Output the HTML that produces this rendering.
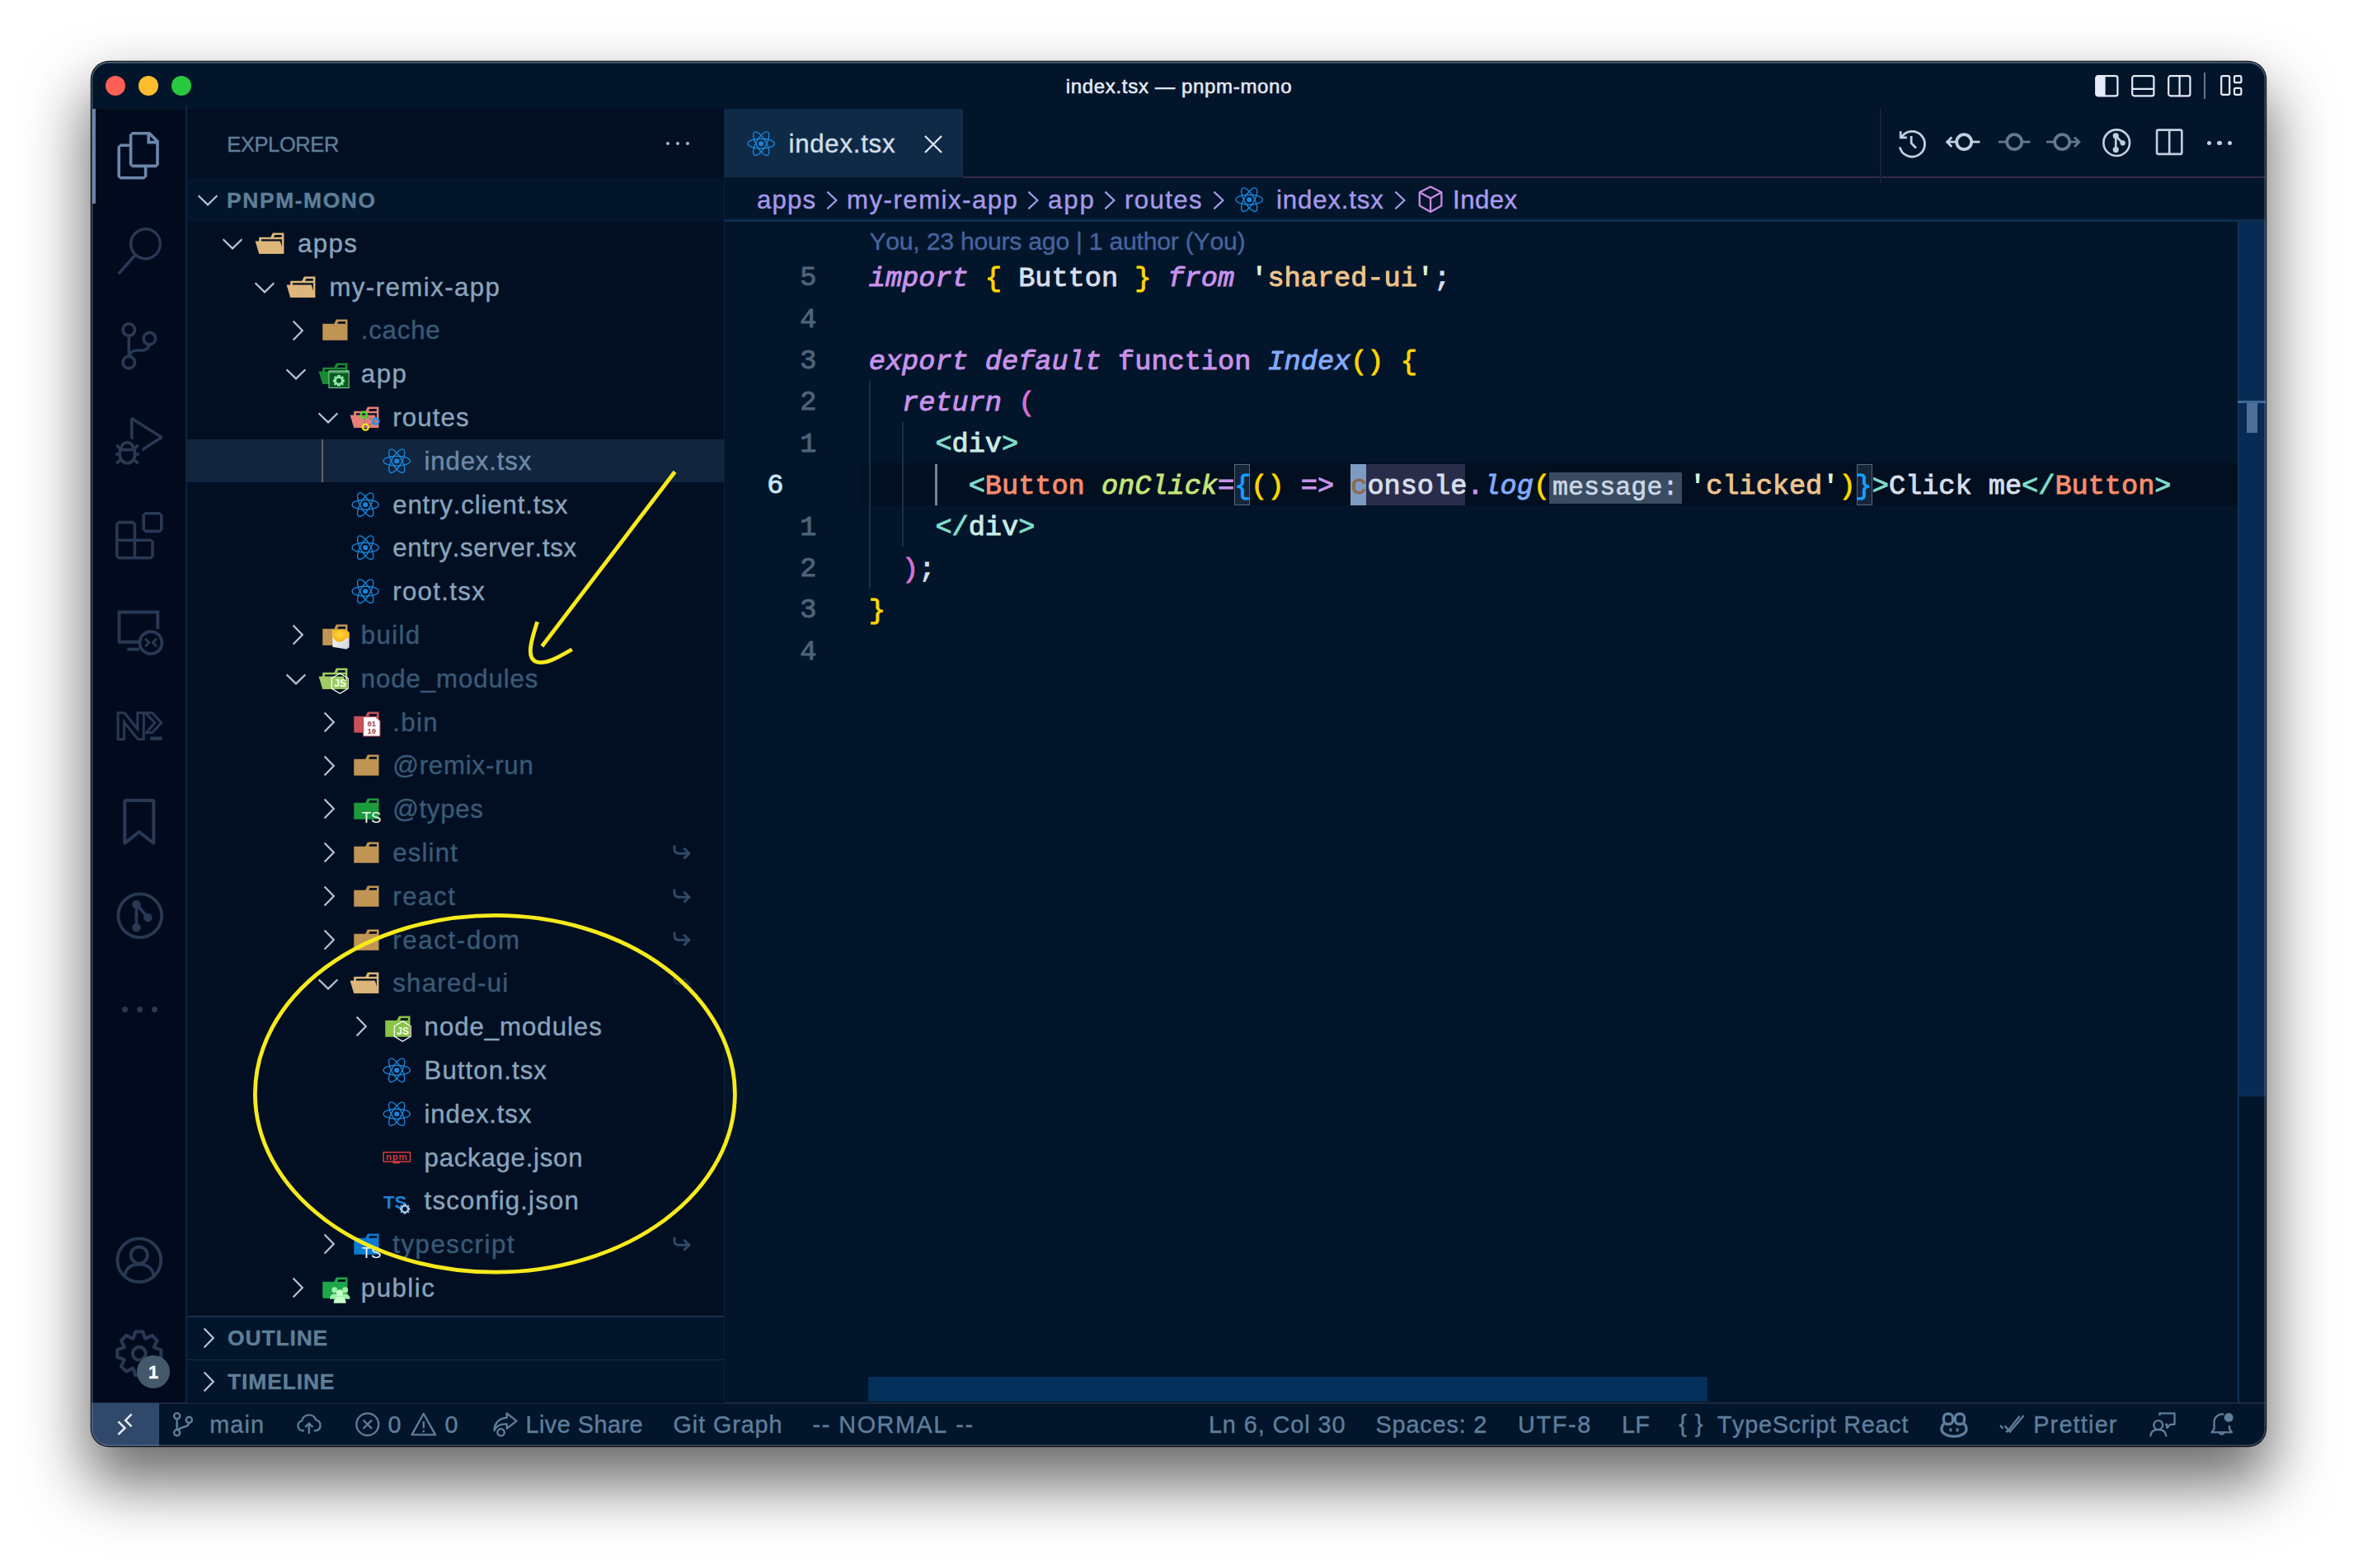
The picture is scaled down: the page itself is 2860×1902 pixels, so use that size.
<!DOCTYPE html>
<html lang="en"><head><meta charset="utf-8"><title>index.tsx — pnpm-mono</title>
<style>
html,body{margin:0;padding:0;}
body{width:2860px;height:1902px;background:#fff;position:relative;overflow:hidden;font-family:"Liberation Sans",sans-serif;}
.b{position:absolute;display:block;}
svg.b{overflow:visible;}
.t{position:absolute;white-space:pre;display:block;-webkit-text-stroke:0.4px currentColor;font-kerning:none;font-variant-ligatures:none;}
.m{font-family:"Liberation Mono",monospace;-webkit-text-stroke:0.95px currentColor;}
#shadow{position:absolute;left:111px;top:75px;width:2637px;height:1679px;border-radius:21px;
 box-shadow:0 0 0 1.2px rgba(0,0,0,.9),0 40px 74px 6px rgba(0,0,0,.58);}
#win{position:absolute;left:111px;top:75px;width:2637px;height:1679px;border-radius:21px;overflow:hidden;background:#02152a;}
#in{position:absolute;left:-111px;top:-75px;width:2860px;height:1902px;}
#over{position:absolute;left:0;top:0;}
#rim{position:absolute;left:0;top:0;right:0;bottom:0;border-radius:21px;box-shadow:inset 0 0 0 1.6px rgba(150,170,200,.33),inset 0 1.4px 0 0.4px rgba(180,190,210,.25);pointer-events:none;}
</style></head><body>
<div id="shadow"></div>
<div id="win"><div id="in">
<div class="b" style="left:111.0px;top:75.0px;width:2637.0px;height:56.5px;background:#02152a;"></div>
<div class="b" style="left:128.0px;top:91.6px;width:24.4px;height:24.4px;border-radius:50%;background:#fe5f57;"></div>
<div class="b" style="left:168.0px;top:91.6px;width:24.4px;height:24.4px;border-radius:50%;background:#febc2e;"></div>
<div class="b" style="left:208.0px;top:91.6px;width:24.4px;height:24.4px;border-radius:50%;background:#28c840;"></div>
<span class="t" style="left:1292.7px;top:89.1px;font-size:24px;line-height:31.2px;color:#e3e8f4;letter-spacing:0.685px;-webkit-text-stroke:0.55px currentColor;">index.tsx — pnpm-mono</span>
<div class="b" style="left:111.0px;top:131.5px;width:115.0px;height:1570.0px;background:#020a1e;"></div>
<div class="b" style="left:224.8px;top:128.0px;width:2.0px;height:1573.5px;background:#12233d;"></div>
<div class="b" style="left:112.4px;top:131.5px;width:3.8px;height:115.5px;background:#6a82a5;"></div>
<div class="b" style="left:226.8px;top:131.5px;width:652.2px;height:1570.0px;background:#020f23;"></div>
<div class="b" style="left:878.0px;top:131.5px;width:1.5px;height:1570.0px;background:#0e2038;"></div>
<div class="b" style="left:879.0px;top:131.5px;width:1869.0px;height:1570.0px;background:#02152a;"></div>
<div class="b" style="left:111.0px;top:1701.5px;width:2637.0px;height:52.5px;background:#02152a;"></div>
<div class="b" style="left:111.0px;top:1700.5px;width:2637.0px;height:2.0px;background:#1c2740;"></div>
<div class="b" style="left:111.0px;top:1701.5px;width:82.0px;height:52.5px;background:#30486a;"></div>
<span class="t" style="left:275.3px;top:158.9px;font-size:25.4px;line-height:33.0px;color:#5f7e97;letter-spacing:-0.333px;">EXPLORER</span>
<div class="b" style="left:807.7px;top:171.5px;width:4.6px;height:4.6px;border-radius:50%;background:#a9b8cc;"></div>
<div class="b" style="left:819.7px;top:171.5px;width:4.6px;height:4.6px;border-radius:50%;background:#a9b8cc;"></div>
<div class="b" style="left:831.7px;top:171.5px;width:4.6px;height:4.6px;border-radius:50%;background:#a9b8cc;"></div>
<div class="b" style="left:226.8px;top:215.5px;width:651.2px;height:53.0px;background:#02152a;"></div>
<span class="t" style="left:275.1px;top:226.0px;font-size:26.4px;line-height:34.3px;color:#5f7e97;font-weight:700;letter-spacing:1.599px;">PNPM-MONO</span>
<svg class="b" style="left:237.5px;top:232.8px;" width="28.0" height="20.0" viewBox="0 0 28 20"><path d="M2.6 4.2 L14 15.4 L25.4 4.2" fill="none" stroke="#b4c3d8" stroke-width="2.2"/></svg>
<div class="b" style="left:226.8px;top:532.6px;width:651.2px;height:52.8px;background:#11253e;"></div>
<div class="b" style="left:390.3px;top:532.6px;width:1.5px;height:52.8px;background:#6e625f;"></div>
<svg class="b" style="left:268.4px;top:286.0px;" width="28.0" height="20.0" viewBox="0 0 28 20"><path d="M2.6 4.2 L14 15.4 L25.4 4.2" fill="none" stroke="#b4c3d8" stroke-width="2.2"/></svg>
<svg class="b" style="left:308.7px;top:275.8px;" width="38.4" height="38.4" viewBox="0 0 32 32"><path d="M27.4,5.5H18.2L16.1,9.7H4.3V26.5H29.5V5.5Zm0,18.7H6.6V11.8H27.4Zm0-14.5H19.2l1-2.1h7.1V9.7Z" fill="#dcb67a"/><polygon points="25.7 13.7 0.5 13.7 4.3 26.5 29.5 26.5 25.7 13.7" fill="#dcb67a"/></svg>
<span class="t" style="left:361.0px;top:275.8px;font-size:31.2px;line-height:40.6px;color:#89a4bb;letter-spacing:1.428px;">apps</span>
<svg class="b" style="left:306.8px;top:338.8px;" width="28.0" height="20.0" viewBox="0 0 28 20"><path d="M2.6 4.2 L14 15.4 L25.4 4.2" fill="none" stroke="#b4c3d8" stroke-width="2.2"/></svg>
<svg class="b" style="left:347.1px;top:328.6px;" width="38.4" height="38.4" viewBox="0 0 32 32"><path d="M27.4,5.5H18.2L16.1,9.7H4.3V26.5H29.5V5.5Zm0,18.7H6.6V11.8H27.4Zm0-14.5H19.2l1-2.1h7.1V9.7Z" fill="#dcb67a"/><polygon points="25.7 13.7 0.5 13.7 4.3 26.5 29.5 26.5 25.7 13.7" fill="#dcb67a"/></svg>
<span class="t" style="left:399.4px;top:328.6px;font-size:31.2px;line-height:40.6px;color:#89a4bb;letter-spacing:1.450px;">my-remix-app</span>
<svg class="b" style="left:350.7px;top:386.6px;" width="20.0" height="28.0" viewBox="0 0 20 28"><path d="M4.6 2.6 L15.8 14 L4.6 25.4" fill="none" stroke="#b4c3d8" stroke-width="2.2"/></svg>
<svg class="b" style="left:385.5px;top:381.4px;" width="38.4" height="38.4" viewBox="0 0 32 32"><path d="M27.5,5.5H18.2L16.1,9.7H4.4V26.5H29.6V5.5Zm0,4.2H19.3l1.1-2.1h7.1Z" fill="#c09553"/></svg>
<span class="t" style="left:437.8px;top:381.4px;font-size:31.2px;line-height:40.6px;color:#395a75;letter-spacing:0.783px;">.cache</span>
<svg class="b" style="left:345.2px;top:444.4px;" width="28.0" height="20.0" viewBox="0 0 28 20"><path d="M2.6 4.2 L14 15.4 L25.4 4.2" fill="none" stroke="#b4c3d8" stroke-width="2.2"/></svg>
<svg class="b" style="left:385.5px;top:434.2px;" width="38.4" height="38.4" viewBox="0 0 32 32"><path d="M27.4,5.5H18.2L16.1,9.7H4.3V26.5H29.5V5.5Zm0,18.7H6.6V11.8H27.4Zm0-14.5H19.2l1-2.1h7.1V9.7Z" fill="#1b8a33"/><polygon points="25.7 13.7 0.5 13.7 4.3 26.5 29.5 26.5 25.7 13.7" fill="#1b8a33"/><rect x="10.8" y="13.2" width="20.2" height="17.3" fill="#0c5a22" stroke="#8fe9ad" stroke-width="0.7"/><rect x="10.8" y="13.2" width="20.2" height="2.2" fill="#8fe9ad" opacity=".55"/><g transform="translate(20.8,23.2) scale(0.967)"><path d="M0,-6 L1.5,-5.8 L2.2,-3.9 L3.9,-4.9 L5.2,-3.6 L4.3,-1.9 L6,-1.2 L6,1.2 L4.3,1.9 L5.2,3.6 L3.9,4.9 L2.2,3.9 L1.5,5.8 L-1.5,5.8 L-2.2,3.9 L-3.9,4.9 L-5.2,3.6 L-4.3,1.9 L-6,1.2 L-6,-1.2 L-4.3,-1.9 L-5.2,-3.6 L-3.9,-4.9 L-2.2,-3.9 L-1.5,-5.8 Z" fill="#8fe9ad"/><circle r="2.6" fill="#0c5a22"/></g></svg>
<span class="t" style="left:437.8px;top:434.2px;font-size:31.2px;line-height:40.6px;color:#89a4bb;letter-spacing:1.492px;">app</span>
<svg class="b" style="left:383.6px;top:497.2px;" width="28.0" height="20.0" viewBox="0 0 28 20"><path d="M2.6 4.2 L14 15.4 L25.4 4.2" fill="none" stroke="#b4c3d8" stroke-width="2.2"/></svg>
<svg class="b" style="left:423.9px;top:487.0px;" width="38.4" height="38.4" viewBox="0 0 32 32"><path d="M27.4,5.5H18.2L16.1,9.7H4.3V26.5H29.5V5.5Zm0,18.7H6.6V11.8H27.4Zm0-14.5H19.2l1-2.1h7.1V9.7Z" fill="#e57f78"/><polygon points="25.7 13.7 0.5 13.7 4.3 26.5 29.5 26.5 25.7 13.7" fill="#e57f78"/><g fill="none" stroke="#6b6f7c" stroke-width="1.4" stroke-dasharray="2 1.4"><path d="M14.4 13.6 L16.1 25.9 M14.4 13.6 L26.5 20.1 M16.1 25.9 L26.5 20.1"/></g><circle cx="14.4" cy="13.6" r="3" fill="none" stroke="#3fdc2b" stroke-width="2"/><circle cx="26.5" cy="20.1" r="3" fill="none" stroke="#2d8fe8" stroke-width="2"/><circle cx="16.1" cy="25.9" r="3" fill="none" stroke="#f2dc20" stroke-width="2"/></svg>
<span class="t" style="left:476.2px;top:487.0px;font-size:31.2px;line-height:40.6px;color:#89a4bb;letter-spacing:1.145px;">routes</span>
<svg class="b" style="left:462.3px;top:539.8px;" width="38.4" height="38.4" viewBox="0 0 32 32"><g fill="none" stroke="#1886dc" stroke-width="1.15"><ellipse cx="16" cy="16" rx="13.4" ry="5"/><ellipse cx="16" cy="16" rx="13.4" ry="5" transform="rotate(60 16 16)"/><ellipse cx="16" cy="16" rx="13.4" ry="5" transform="rotate(120 16 16)"/></g><circle cx="16" cy="16" r="2.5" fill="#1886dc"/></svg>
<span class="t" style="left:514.6px;top:539.8px;font-size:31.2px;line-height:40.6px;color:#6f89a6;letter-spacing:0.827px;">index.tsx</span>
<svg class="b" style="left:423.9px;top:592.6px;" width="38.4" height="38.4" viewBox="0 0 32 32"><g fill="none" stroke="#1886dc" stroke-width="1.15"><ellipse cx="16" cy="16" rx="13.4" ry="5"/><ellipse cx="16" cy="16" rx="13.4" ry="5" transform="rotate(60 16 16)"/><ellipse cx="16" cy="16" rx="13.4" ry="5" transform="rotate(120 16 16)"/></g><circle cx="16" cy="16" r="2.5" fill="#1886dc"/></svg>
<span class="t" style="left:476.2px;top:592.6px;font-size:31.2px;line-height:40.6px;color:#89a4bb;letter-spacing:0.856px;">entry.client.tsx</span>
<svg class="b" style="left:423.9px;top:645.4px;" width="38.4" height="38.4" viewBox="0 0 32 32"><g fill="none" stroke="#1886dc" stroke-width="1.15"><ellipse cx="16" cy="16" rx="13.4" ry="5"/><ellipse cx="16" cy="16" rx="13.4" ry="5" transform="rotate(60 16 16)"/><ellipse cx="16" cy="16" rx="13.4" ry="5" transform="rotate(120 16 16)"/></g><circle cx="16" cy="16" r="2.5" fill="#1886dc"/></svg>
<span class="t" style="left:476.2px;top:645.4px;font-size:31.2px;line-height:40.6px;color:#89a4bb;letter-spacing:0.646px;">entry.server.tsx</span>
<svg class="b" style="left:423.9px;top:698.2px;" width="38.4" height="38.4" viewBox="0 0 32 32"><g fill="none" stroke="#1886dc" stroke-width="1.15"><ellipse cx="16" cy="16" rx="13.4" ry="5"/><ellipse cx="16" cy="16" rx="13.4" ry="5" transform="rotate(60 16 16)"/><ellipse cx="16" cy="16" rx="13.4" ry="5" transform="rotate(120 16 16)"/></g><circle cx="16" cy="16" r="2.5" fill="#1886dc"/></svg>
<span class="t" style="left:476.2px;top:698.2px;font-size:31.2px;line-height:40.6px;color:#89a4bb;letter-spacing:1.349px;">root.tsx</span>
<svg class="b" style="left:350.7px;top:756.2px;" width="20.0" height="28.0" viewBox="0 0 20 28"><path d="M4.6 2.6 L15.8 14 L4.6 25.4" fill="none" stroke="#b4c3d8" stroke-width="2.2"/></svg>
<svg class="b" style="left:385.5px;top:751.0px;" width="38.4" height="38.4" viewBox="0 0 32 32"><path d="M27.5,5.5H18.2L16.1,9.7H4.4V26.5H29.6V5.5Zm0,4.2H19.3l1.1-2.1h7.1Z" fill="#c09553"/><defs><linearGradient id="gb" x1="0" y1="0" x2="1" y2="1"><stop offset="0" stop-color="#ffffff"/><stop offset="1" stop-color="#cfd0da"/></linearGradient><radialGradient id="gy" cx=".45" cy=".4" r=".7"><stop offset="0" stop-color="#ffd83b"/><stop offset="1" stop-color="#f5a80c"/></radialGradient></defs><path d="M14.5 10.8 L28 10.8 L31.3 13.5 L31.3 28.5 L28.6 30.4 L14.5 28.2 Z" fill="url(#gb)"/><path d="M14.5 10.8 L28 10.8 L31.3 13.5 L31.3 19 C27 18 27 23 21.5 23 C17 23 15.2 19 14.5 17 Z" fill="url(#gy)"/></svg>
<span class="t" style="left:437.8px;top:751.0px;font-size:31.2px;line-height:40.6px;color:#395a75;letter-spacing:1.380px;">build</span>
<svg class="b" style="left:345.2px;top:814.0px;" width="28.0" height="20.0" viewBox="0 0 28 20"><path d="M2.6 4.2 L14 15.4 L25.4 4.2" fill="none" stroke="#b4c3d8" stroke-width="2.2"/></svg>
<svg class="b" style="left:385.5px;top:803.8px;" width="38.4" height="38.4" viewBox="0 0 32 32"><path d="M27.4,5.5H18.2L16.1,9.7H4.3V26.5H29.5V5.5Zm0,18.7H6.6V11.8H27.4Zm0-14.5H19.2l1-2.1h7.1V9.7Z" fill="#9ccc65"/><polygon points="25.7 13.7 0.5 13.7 4.3 26.5 29.5 26.5 25.7 13.7" fill="#9ccc65"/><polygon points="21.90,10.60 30.21,15.70 30.21,25.90 21.90,31.00 13.59,25.90 13.59,15.70" fill="none" stroke="#ffffff" stroke-width="1"/><text x="22.2" y="24.400000000000002" font-family="Liberation Sans,sans-serif" font-weight="700" font-size="10" text-anchor="middle" fill="#f4ffe8">JS</text></svg>
<span class="t" style="left:437.8px;top:803.8px;font-size:31.2px;line-height:40.6px;color:#395a75;letter-spacing:0.905px;">node_modules</span>
<svg class="b" style="left:389.1px;top:861.8px;" width="20.0" height="28.0" viewBox="0 0 20 28"><path d="M4.6 2.6 L15.8 14 L4.6 25.4" fill="none" stroke="#b4c3d8" stroke-width="2.2"/></svg>
<svg class="b" style="left:423.9px;top:856.6px;" width="38.4" height="38.4" viewBox="0 0 32 32"><path d="M27.5,5.5H18.2L16.1,9.7H4.4V26.5H29.6V5.5Zm0,4.2H19.3l1.1-2.1h7.1Z" fill="#c8505a"/><path d="M13.9 10.4 L26.5 10.4 L30.8 14.6 L30.8 30 L13.9 30 Z" fill="#ffffff" stroke="#b84a55" stroke-width="0.9"/><text x="22.3" y="19.6" font-family="Liberation Mono,monospace" font-weight="700" font-size="7.4" text-anchor="middle" fill="#a3363f">01</text><text x="22.3" y="27.4" font-family="Liberation Mono,monospace" font-weight="700" font-size="7.4" text-anchor="middle" fill="#a3363f">10</text></svg>
<span class="t" style="left:476.2px;top:856.6px;font-size:31.2px;line-height:40.6px;color:#395a75;letter-spacing:1.412px;">.bin</span>
<svg class="b" style="left:389.1px;top:914.6px;" width="20.0" height="28.0" viewBox="0 0 20 28"><path d="M4.6 2.6 L15.8 14 L4.6 25.4" fill="none" stroke="#b4c3d8" stroke-width="2.2"/></svg>
<svg class="b" style="left:423.9px;top:909.4px;" width="38.4" height="38.4" viewBox="0 0 32 32"><path d="M27.5,5.5H18.2L16.1,9.7H4.4V26.5H29.6V5.5Zm0,4.2H19.3l1.1-2.1h7.1Z" fill="#c09553"/></svg>
<span class="t" style="left:476.2px;top:909.4px;font-size:31.2px;line-height:40.6px;color:#395a75;letter-spacing:0.813px;">@remix-run</span>
<svg class="b" style="left:389.1px;top:967.4px;" width="20.0" height="28.0" viewBox="0 0 20 28"><path d="M4.6 2.6 L15.8 14 L4.6 25.4" fill="none" stroke="#b4c3d8" stroke-width="2.2"/></svg>
<svg class="b" style="left:423.9px;top:962.2px;" width="38.4" height="38.4" viewBox="0 0 32 32"><path d="M27.5,5.5H18.2L16.1,9.7H4.4V26.5H29.6V5.5Zm0,4.2H19.3l1.1-2.1h7.1Z" fill="#1d9a3c"/><text x="22.2" y="30.2" font-family="Liberation Sans,sans-serif" font-weight="400" font-size="15.5" text-anchor="middle" fill="#e9ffe9">TS</text></svg>
<span class="t" style="left:476.2px;top:962.2px;font-size:31.2px;line-height:40.6px;color:#395a75;letter-spacing:0.679px;">@types</span>
<svg class="b" style="left:389.1px;top:1020.2px;" width="20.0" height="28.0" viewBox="0 0 20 28"><path d="M4.6 2.6 L15.8 14 L4.6 25.4" fill="none" stroke="#b4c3d8" stroke-width="2.2"/></svg>
<svg class="b" style="left:423.9px;top:1015.0px;" width="38.4" height="38.4" viewBox="0 0 32 32"><path d="M27.5,5.5H18.2L16.1,9.7H4.4V26.5H29.6V5.5Zm0,4.2H19.3l1.1-2.1h7.1Z" fill="#c09553"/></svg>
<span class="t" style="left:476.2px;top:1015.0px;font-size:31.2px;line-height:40.6px;color:#395a75;letter-spacing:1.161px;">eslint</span>
<svg class="b" style="left:814.6px;top:1023.7px;" width="24.0" height="21.0" viewBox="0 0 24 21"><path d="M3 1.5 V6 Q3 11.2 8.4 11.2 H20.5 M14.4 4.8 L20.9 11.2 L14.4 17.6" fill="none" stroke="#2f4a68" stroke-width="2.9"/></svg>
<svg class="b" style="left:389.1px;top:1073.0px;" width="20.0" height="28.0" viewBox="0 0 20 28"><path d="M4.6 2.6 L15.8 14 L4.6 25.4" fill="none" stroke="#b4c3d8" stroke-width="2.2"/></svg>
<svg class="b" style="left:423.9px;top:1067.8px;" width="38.4" height="38.4" viewBox="0 0 32 32"><path d="M27.5,5.5H18.2L16.1,9.7H4.4V26.5H29.6V5.5Zm0,4.2H19.3l1.1-2.1h7.1Z" fill="#c09553"/></svg>
<span class="t" style="left:476.2px;top:1067.8px;font-size:31.2px;line-height:40.6px;color:#395a75;letter-spacing:1.594px;">react</span>
<svg class="b" style="left:814.6px;top:1076.5px;" width="24.0" height="21.0" viewBox="0 0 24 21"><path d="M3 1.5 V6 Q3 11.2 8.4 11.2 H20.5 M14.4 4.8 L20.9 11.2 L14.4 17.6" fill="none" stroke="#2f4a68" stroke-width="2.9"/></svg>
<svg class="b" style="left:389.1px;top:1125.8px;" width="20.0" height="28.0" viewBox="0 0 20 28"><path d="M4.6 2.6 L15.8 14 L4.6 25.4" fill="none" stroke="#b4c3d8" stroke-width="2.2"/></svg>
<svg class="b" style="left:423.9px;top:1120.6px;" width="38.4" height="38.4" viewBox="0 0 32 32"><path d="M27.5,5.5H18.2L16.1,9.7H4.4V26.5H29.6V5.5Zm0,4.2H19.3l1.1-2.1h7.1Z" fill="#c09553"/></svg>
<span class="t" style="left:476.2px;top:1120.6px;font-size:31.2px;line-height:40.6px;color:#395a75;letter-spacing:1.662px;">react-dom</span>
<svg class="b" style="left:814.6px;top:1129.3px;" width="24.0" height="21.0" viewBox="0 0 24 21"><path d="M3 1.5 V6 Q3 11.2 8.4 11.2 H20.5 M14.4 4.8 L20.9 11.2 L14.4 17.6" fill="none" stroke="#2f4a68" stroke-width="2.9"/></svg>
<svg class="b" style="left:383.6px;top:1183.6px;" width="28.0" height="20.0" viewBox="0 0 28 20"><path d="M2.6 4.2 L14 15.4 L25.4 4.2" fill="none" stroke="#b4c3d8" stroke-width="2.2"/></svg>
<svg class="b" style="left:423.9px;top:1173.4px;" width="38.4" height="38.4" viewBox="0 0 32 32"><path d="M27.4,5.5H18.2L16.1,9.7H4.3V26.5H29.5V5.5Zm0,18.7H6.6V11.8H27.4Zm0-14.5H19.2l1-2.1h7.1V9.7Z" fill="#dcb67a"/><polygon points="25.7 13.7 0.5 13.7 4.3 26.5 29.5 26.5 25.7 13.7" fill="#dcb67a"/></svg>
<span class="t" style="left:476.2px;top:1173.4px;font-size:31.2px;line-height:40.6px;color:#395a75;letter-spacing:1.259px;">shared-ui</span>
<svg class="b" style="left:814.6px;top:1182.1px;" width="24.0" height="21.0" viewBox="0 0 24 21"><path d="M3 1.5 V6 Q3 11.2 8.4 11.2 H20.5 M14.4 4.8 L20.9 11.2 L14.4 17.6" fill="none" stroke="#182a42" stroke-width="2.9"/></svg>
<svg class="b" style="left:427.5px;top:1231.4px;" width="20.0" height="28.0" viewBox="0 0 20 28"><path d="M4.6 2.6 L15.8 14 L4.6 25.4" fill="none" stroke="#b4c3d8" stroke-width="2.2"/></svg>
<svg class="b" style="left:462.3px;top:1226.2px;" width="38.4" height="38.4" viewBox="0 0 32 32"><path d="M27.5,5.5H18.2L16.1,9.7H4.4V26.5H29.6V5.5Zm0,4.2H19.3l1.1-2.1h7.1Z" fill="#8bc34a"/><polygon points="21.90,10.60 30.21,15.70 30.21,25.90 21.90,31.00 13.59,25.90 13.59,15.70" fill="none" stroke="#ffffff" stroke-width="1"/><text x="22.2" y="24.400000000000002" font-family="Liberation Sans,sans-serif" font-weight="700" font-size="10" text-anchor="middle" fill="#f4ffe8">JS</text></svg>
<span class="t" style="left:514.6px;top:1226.2px;font-size:31.2px;line-height:40.6px;color:#89a4bb;letter-spacing:0.959px;">node_modules</span>
<svg class="b" style="left:462.3px;top:1279.0px;" width="38.4" height="38.4" viewBox="0 0 32 32"><g fill="none" stroke="#1886dc" stroke-width="1.15"><ellipse cx="16" cy="16" rx="13.4" ry="5"/><ellipse cx="16" cy="16" rx="13.4" ry="5" transform="rotate(60 16 16)"/><ellipse cx="16" cy="16" rx="13.4" ry="5" transform="rotate(120 16 16)"/></g><circle cx="16" cy="16" r="2.5" fill="#1886dc"/></svg>
<span class="t" style="left:514.6px;top:1279.0px;font-size:31.2px;line-height:40.6px;color:#89a4bb;letter-spacing:1.067px;">Button.tsx</span>
<svg class="b" style="left:462.3px;top:1331.8px;" width="38.4" height="38.4" viewBox="0 0 32 32"><g fill="none" stroke="#1886dc" stroke-width="1.15"><ellipse cx="16" cy="16" rx="13.4" ry="5"/><ellipse cx="16" cy="16" rx="13.4" ry="5" transform="rotate(60 16 16)"/><ellipse cx="16" cy="16" rx="13.4" ry="5" transform="rotate(120 16 16)"/></g><circle cx="16" cy="16" r="2.5" fill="#1886dc"/></svg>
<span class="t" style="left:514.6px;top:1331.8px;font-size:31.2px;line-height:40.6px;color:#89a4bb;letter-spacing:0.839px;">index.tsx</span>
<svg class="b" style="left:462.3px;top:1384.6px;" width="38.4" height="38.4" viewBox="0 0 32 32"><rect x="2.6" y="10.6" width="27" height="9.4" fill="none" stroke="#d13a3a" stroke-width="1.3"/><rect x="12" y="19.6" width="7" height="2.4" fill="#d13a3a"/><text x="16" y="18.6" font-family="Liberation Sans,sans-serif" font-weight="700" font-size="9.6" text-anchor="middle" fill="#d13a3a" letter-spacing="0.6">npm</text></svg>
<span class="t" style="left:514.6px;top:1384.6px;font-size:31.2px;line-height:40.6px;color:#89a4bb;letter-spacing:0.743px;">package.json</span>
<svg class="b" style="left:462.3px;top:1437.4px;" width="38.4" height="38.4" viewBox="0 0 32 32"><text x="2.4" y="24.2" font-family="Liberation Sans,sans-serif" font-weight="700" font-size="18.5" fill="#1b82d6">TS</text><g transform="translate(24.2,24.6) scale(0.867)"><path d="M0,-6 L1.5,-5.8 L2.2,-3.9 L3.9,-4.9 L5.2,-3.6 L4.3,-1.9 L6,-1.2 L6,1.2 L4.3,1.9 L5.2,3.6 L3.9,4.9 L2.2,3.9 L1.5,5.8 L-1.5,5.8 L-2.2,3.9 L-3.9,4.9 L-5.2,3.6 L-4.3,1.9 L-6,1.2 L-6,-1.2 L-4.3,-1.9 L-5.2,-3.6 L-3.9,-4.9 L-2.2,-3.9 L-1.5,-5.8 Z" fill="#9bc4ea"/><circle r="2.6" fill="#020f23"/></g></svg>
<span class="t" style="left:514.6px;top:1437.4px;font-size:31.2px;line-height:40.6px;color:#89a4bb;letter-spacing:1.151px;">tsconfig.json</span>
<svg class="b" style="left:389.1px;top:1495.4px;" width="20.0" height="28.0" viewBox="0 0 20 28"><path d="M4.6 2.6 L15.8 14 L4.6 25.4" fill="none" stroke="#b4c3d8" stroke-width="2.2"/></svg>
<svg class="b" style="left:423.9px;top:1490.2px;" width="38.4" height="38.4" viewBox="0 0 32 32"><path d="M27.5,5.5H18.2L16.1,9.7H4.4V26.5H29.6V5.5Zm0,4.2H19.3l1.1-2.1h7.1Z" fill="#0a7bd0"/><text x="22.2" y="30.2" font-family="Liberation Sans,sans-serif" font-weight="400" font-size="15.5" text-anchor="middle" fill="#eaf5ff">TS</text></svg>
<span class="t" style="left:476.2px;top:1490.2px;font-size:31.2px;line-height:40.6px;color:#395a75;letter-spacing:1.547px;">typescript</span>
<svg class="b" style="left:814.6px;top:1498.9px;" width="24.0" height="21.0" viewBox="0 0 24 21"><path d="M3 1.5 V6 Q3 11.2 8.4 11.2 H20.5 M14.4 4.8 L20.9 11.2 L14.4 17.6" fill="none" stroke="#2f4a68" stroke-width="2.9"/></svg>
<svg class="b" style="left:350.7px;top:1548.2px;" width="20.0" height="28.0" viewBox="0 0 20 28"><path d="M4.6 2.6 L15.8 14 L4.6 25.4" fill="none" stroke="#b4c3d8" stroke-width="2.2"/></svg>
<svg class="b" style="left:385.5px;top:1543.0px;" width="38.4" height="38.4" viewBox="0 0 32 32"><path d="M27.5,5.5H18.2L16.1,9.7H4.4V26.5H29.6V5.5Zm0,4.2H19.3l1.1-2.1h7.1Z" fill="#1fa64b"/><g fill="#9cf0a4"><circle cx="16.5" cy="18.2" r="2.9"/><circle cx="27.2" cy="18.2" r="2.9"/><path d="M11.6 27.2 c0-3.4 2.2-5.2 4.9-5.2 s4.9 1.8 4.9 5.2z"/><path d="M22.3 27.2 c0-3.4 2.2-5.2 4.9-5.2 s4.9 1.8 4.9 5.2z"/></g><g fill="#c6ffc9"><circle cx="21.8" cy="21.2" r="3.5"/><path d="M15.6 31.4 c0-4.6 2.8-6.6 6.2-6.6 s6.2 2 6.2 6.6z"/></g></svg>
<span class="t" style="left:437.8px;top:1543.0px;font-size:31.2px;line-height:40.6px;color:#89a4bb;letter-spacing:1.504px;">public</span>
<div class="b" style="left:226.8px;top:1596.0px;width:651.2px;height:1.6px;background:#172b45;"></div>
<div class="b" style="left:226.8px;top:1597.6px;width:651.2px;height:51.2px;background:#02152a;"></div>
<svg class="b" style="left:243.0px;top:1609.3px;" width="20.0" height="28.0" viewBox="0 0 20 28"><path d="M4.6 2.6 L15.8 14 L4.6 25.4" fill="none" stroke="#b4c3d8" stroke-width="2.2"/></svg>
<span class="t" style="left:276.0px;top:1605.9px;font-size:26.4px;line-height:34.3px;color:#5f7e97;font-weight:700;letter-spacing:0.900px;">OUTLINE</span>
<div class="b" style="left:226.8px;top:1648.8px;width:651.2px;height:1.6px;background:#172b45;"></div>
<div class="b" style="left:226.8px;top:1650.4px;width:651.2px;height:51.2px;background:#02152a;"></div>
<svg class="b" style="left:243.0px;top:1662.1px;" width="20.0" height="28.0" viewBox="0 0 20 28"><path d="M4.6 2.6 L15.8 14 L4.6 25.4" fill="none" stroke="#b4c3d8" stroke-width="2.2"/></svg>
<span class="t" style="left:276.0px;top:1658.7px;font-size:26.4px;line-height:34.3px;color:#5f7e97;font-weight:700;letter-spacing:0.900px;">TIMELINE</span>
<svg class="b" style="left:139.8px;top:160.3px;" width="57.6" height="57.6" viewBox="0 0 24 24"><g fill="#6d87ab"><path d="M17.5 0h-9L7 1.5V6H2.5L1 7.5v15.07L2.5 24h12.07L16 22.57V18h4.7l1.3-1.43V4.5L17.5 0zm0 2.12l2.38 2.38H17.5V2.12zm-3 20.38h-12v-15H7v9.07L8.5 18h6v4.5zm6-6h-12v-15H16V6h4.5v10.5z"/></g></svg>
<svg class="b" style="left:139.8px;top:275.5px;" width="57.6" height="57.6" viewBox="0 0 24 24"><g fill="#293953"><path d="M15.25 0a8.25 8.25 0 0 0-6.18 13.72L1 22.88l1.12 1.12 8.05-9.12A8.251 8.251 0 1 0 15.25.01V0zm0 15a6.75 6.75 0 1 1 0-13.5 6.75 6.75 0 0 1 0 13.5z"/></g></svg>
<svg class="b" style="left:139.8px;top:390.7px;" width="57.6" height="57.6" viewBox="0 0 24 24"><g fill="#293953"><path d="M21.007 8.222A3.738 3.738 0 0 0 15.045 5.2a3.737 3.737 0 0 0 1.156 6.583 2.988 2.988 0 0 1-2.668 1.67h-2.99a4.456 4.456 0 0 0-2.989 1.165V7.4a3.737 3.737 0 1 0-1.494 0v9.117a3.776 3.776 0 1 0 1.816.099 2.99 2.99 0 0 1 2.668-1.667h2.99a4.484 4.484 0 0 0 4.223-3.039 3.736 3.736 0 0 0 3.25-3.687zM4.565 3.738a2.242 2.242 0 1 1 4.484 0 2.242 2.242 0 0 1-4.484 0zm4.484 16.441a2.242 2.242 0 1 1-4.484 0 2.242 2.242 0 0 1 4.484 0zm8.221-9.715a2.242 2.242 0 1 1 0-4.485 2.242 2.242 0 0 1 0 4.485z"/></g></svg>
<svg class="b" style="left:139.8px;top:505.9px;" width="57.6" height="57.6" viewBox="0 0 24 24"><g fill="#293953"><path d="M10.94 13.5l-1.32 1.32a3.73 3.73 0 0 0-7.24 0L1.06 13.5 0 14.56l1.72 1.72-.22.22V18H0v1.5h1.5v.08c.077.489.214.966.41 1.42L0 22.94 1.06 24l1.65-1.65A4.308 4.308 0 0 0 6 24a4.31 4.31 0 0 0 3.29-1.65L10.94 24 12 22.94 10.09 21c.198-.464.336-.951.41-1.45v-.1H12V18h-1.5v-1.5l-.22-.22L12 14.56l-1.06-1.06zM6 13.5a2.25 2.25 0 0 1 2.25 2.25h-4.5A2.25 2.25 0 0 1 6 13.5zm3 6a3.33 3.33 0 0 1-3 3 3.33 3.33 0 0 1-3-3v-2.25h6v2.25zm14.76-9.9v1.26L13.5 17.37V15.6l8.5-5.37L9 2v9.46a5.07 5.07 0 0 0-1.5-.72V.63L8.64 0l15.12 9.6z"/></g></svg>
<svg class="b" style="left:139.8px;top:621.1px;" width="57.6" height="57.6" viewBox="0 0 24 24"><g fill="#293953"><path d="M13.5 1.5L15 0h7.5L24 1.5V9l-1.5 1.5H15L13.5 9V1.5zm1.5 0V9h7.5V1.5H15zM0 15V6l1.5-1.5H9L10.5 6v7.5H18l1.5 1.5v7.5L18 24H1.5L0 22.5V15zm9-1.5V6H1.5v7.5H9zM9 15H1.5v7.5H9V15zm1.5 7.5H18V15h-7.5v7.5z"/></g></svg>
<svg class="b" style="left:139.8px;top:736.3px;" width="57.6" height="57.6" viewBox="0 0 24 24"><g fill="none" stroke="#293953" stroke-width="1.6"><path d="M13.2 17.8 H1.9 V2.7 H21.4 V11.2"/><path d="M6 21.5 H12.2"/><circle cx="17.9" cy="18.2" r="5.6" fill="#020a1e"/><path d="M15 16.1 L17 18.1 L15 20.1 M20.9 16.1 L18.9 18.1 L20.9 20.1" stroke-width="1.2"/></g></svg>
<svg class="b" style="left:139.8px;top:851.5px;" width="57.6" height="57.6" viewBox="0 0 24 24"><g fill="none" stroke="#293953" stroke-width="1.25" stroke-linejoin="miter"><path d="M1.3 18.6 V5.3 H4.6 L11.2 13.5 V5.3 H14.3 V18.6 H11.4 L4.4 10 V18.6 Z"/><path d="M15.3 5.3 H18.6 L23.2 10.3 L18.6 15.3 H15.6 L19.9 10.3 Z"/><path d="M17.6 18.2 H23.6" stroke-width="1.8"/></g></svg>
<svg class="b" style="left:139.8px;top:966.7px;" width="57.6" height="57.6" viewBox="0 0 24 24"><path d="M5.6 1.6 H18.4 Q19.3 1.6 19.3 2.5 V23.2 L12 17.6 L4.7 23.2 V2.5 Q4.7 1.6 5.6 1.6 Z" fill="none" stroke="#293953" stroke-width="1.7" stroke-linejoin="round"/></svg>
<svg class="b" style="left:139.8px;top:1081.9px;" width="57.6" height="57.6" viewBox="0 0 24 24"><g fill="none" stroke="#293953" stroke-width="1.6"><circle cx="12.4" cy="12" r="11"/><path d="M10.6 6.2 V18.2 M10.6 6.2 L16.3 12.8"/></g><g fill="#293953"><circle cx="10.6" cy="6.3" r="2.2"/><circle cx="10.6" cy="18" r="2.2"/><circle cx="16.4" cy="12.9" r="2.2"/></g></svg>
<div class="b" style="left:148.0px;top:1221.3px;width:7px;height:7px;border-radius:50%;background:#293953;"></div>
<div class="b" style="left:166.1px;top:1221.3px;width:7px;height:7px;border-radius:50%;background:#293953;"></div>
<div class="b" style="left:184.1px;top:1221.3px;width:7px;height:7px;border-radius:50%;background:#293953;"></div>
<svg class="b" style="left:139.8px;top:1499.6px;" width="57.6" height="57.6" viewBox="0 0 24 24"><g fill="none" stroke="#293953" stroke-width="1.6"><circle cx="12" cy="12" r="11"/><circle cx="12" cy="9.4" r="4.2"/><path d="M4.6 20 C5.4 15.6 8.4 14 12 14 S18.6 15.6 19.4 20"/></g></svg>
<svg class="b" style="left:139.8px;top:1612.8px;" width="57.6" height="57.6" viewBox="0 0 24 24"><g fill="none" stroke="#293953" stroke-width="1.7" stroke-linejoin="round"><path d="M9.01 4.36 L10.16 0.95 L13.84 0.95 L14.99 4.36 L15.29 4.49 L18.51 2.89 L21.11 5.49 L19.51 8.71 L19.64 9.01 L23.05 10.16 L23.05 13.84 L19.64 14.99 L19.51 15.29 L21.11 18.51 L18.51 21.11 L15.29 19.51 L14.99 19.64 L13.84 23.05 L10.16 23.05 L9.01 19.64 L8.71 19.51 L5.49 21.11 L2.89 18.51 L4.49 15.29 L4.36 14.99 L0.95 13.84 L0.95 10.16 L4.36 9.01 L4.49 8.71 L2.89 5.49 L5.49 2.89 L8.71 4.49 Z"/><circle cx="12" cy="12" r="3.3"/></g></svg>
<div class="b" style="left:166.0px;top:1644.0px;width:40px;height:40px;border-radius:50%;background:#44596b;"></div>
<span class="t" style="left:180.0px;top:1651.0px;font-size:21.6px;line-height:28.1px;color:#ffffff;font-weight:700;">1</span>
<div class="b" style="left:879.0px;top:132.0px;width:288.0px;height:82.5px;background:#0f2a46;"></div>
<div class="b" style="left:1166.2px;top:132.0px;width:1.4px;height:82.5px;background:#1a2b45;"></div>
<div class="b" style="left:1167.6px;top:214.1px;width:1580.4px;height:1.6px;background:#33294a;"></div>
<svg class="b" style="left:903.8px;top:155.1px;" width="38.4" height="38.4" viewBox="0 0 32 32"><g fill="none" stroke="#1886dc" stroke-width="1.15"><ellipse cx="16" cy="16" rx="13.4" ry="5"/><ellipse cx="16" cy="16" rx="13.4" ry="5" transform="rotate(60 16 16)"/><ellipse cx="16" cy="16" rx="13.4" ry="5" transform="rotate(120 16 16)"/></g><circle cx="16" cy="16" r="2.5" fill="#1886dc"/></svg>
<span class="t" style="left:956.5px;top:155.4px;font-size:31.2px;line-height:40.6px;color:#d2dee7;letter-spacing:0.739px;">index.tsx</span>
<svg class="b" style="left:1119.8px;top:162.8px;" width="24.0" height="24.0" viewBox="0 0 24 24"><path d="M2 2 L22 22 M22 2 L2 22" stroke="#dfe6f0" stroke-width="2.3" fill="none"/></svg>
<div class="b" style="left:2280.2px;top:131.5px;width:1.4px;height:90.5px;background:#13243c;"></div>
<svg class="b" style="left:2298.5px;top:154.3px;" width="38.4" height="38.4" viewBox="0 0 16 16"><g fill="none" stroke="#c3cfe0" stroke-width="1.15"><path d="M3.1 5.1 A6.4 6.4 0 1 1 2.2 10.2"/><path d="M2.6 2.2 V5.4 H5.8"/><path d="M8 4.6 V8.2 L10.4 10.6"/></g></svg>
<svg class="b" style="left:2363.3px;top:152.6px;" width="38.4" height="38.4" viewBox="0 0 16 16"><g fill="none" stroke="#c3cfe0" stroke-width="1.55"><circle cx="8" cy="8" r="3.75"/><path d="M4.2 8 H-0.6 M1.8 5.6 L-0.6 8 L1.8 10.4" stroke-width="1.15"/><path d="M11.8 8 H16" stroke-width="1.15"/></g></svg>
<svg class="b" style="left:2423.6px;top:152.6px;" width="38.4" height="38.4" viewBox="0 0 16 16"><g fill="none" stroke="#64788f" stroke-width="1.55"><circle cx="8" cy="8" r="3.75"/><path d="M4.2 8 H0" stroke-width="1.15"/><path d="M11.8 8 H16" stroke-width="1.15"/></g></svg>
<svg class="b" style="left:2482.3px;top:152.6px;" width="38.4" height="38.4" viewBox="0 0 16 16"><g fill="none" stroke="#64788f" stroke-width="1.55"><circle cx="8" cy="8" r="3.75"/><path d="M4.2 8 H0" stroke-width="1.15"/><path d="M11.8 8 H16.6 M14.2 5.6 L16.6 8 L14.2 10.4" stroke-width="1.15"/></g></svg>
<svg class="b" style="left:2547.6px;top:153.6px;" width="38.4" height="38.4" viewBox="0 0 16 16"><g fill="none" stroke="#c3cfe0" stroke-width="1.1"><circle cx="8" cy="8" r="6.6"/><path d="M7.6 4.6 V11.4 M7.6 4.6 L11 8"/></g><g fill="#c3cfe0"><circle cx="7.6" cy="4.5" r="1.5"/><circle cx="7.6" cy="11.5" r="1.5"/><circle cx="11.1" cy="8.1" r="1.3"/></g></svg>
<svg class="b" style="left:2611.8px;top:153.2px;" width="38.4" height="38.4" viewBox="0 0 16 16"><g fill="none" stroke="#c3cfe0" stroke-width="1.1"><rect x="1.7" y="1.9" width="12.6" height="12.2" rx="0.8"/><path d="M8 1.9 V14.1"/></g></svg>
<div class="b" style="left:2677.2px;top:171.3px;width:5.2px;height:5.2px;border-radius:50%;background:#c3cfe0;"></div>
<div class="b" style="left:2689.4px;top:171.3px;width:5.2px;height:5.2px;border-radius:50%;background:#c3cfe0;"></div>
<div class="b" style="left:2701.6px;top:171.3px;width:5.2px;height:5.2px;border-radius:50%;background:#c3cfe0;"></div>
<svg class="b" style="left:2540.6px;top:90.5px;" width="28.6" height="26.5" viewBox="0 0 28.6 26.5"><rect x="1.2" y="1.2" width="26.2" height="24.1" rx="2.4" fill="none" stroke="#e6ebf7" stroke-width="2.2"/><path d="M1.2 3 Q1.2 1.2 3 1.2 H12.6 V25.3 H3 Q1.2 25.3 1.2 23.5 Z" fill="#e6ebf7"/></svg>
<svg class="b" style="left:2585.2px;top:90.5px;" width="28.6" height="26.5" viewBox="0 0 28.6 26.5"><rect x="1.2" y="1.2" width="26.2" height="24.1" rx="2.4" fill="none" stroke="#e6ebf7" stroke-width="2.2"/><path d="M1.2 16.8 H27.4" stroke="#e6ebf7" stroke-width="2.2"/></svg>
<svg class="b" style="left:2629.0px;top:90.5px;" width="28.6" height="26.5" viewBox="0 0 28.6 26.5"><rect x="1.2" y="1.2" width="26.2" height="24.1" rx="2.4" fill="none" stroke="#e6ebf7" stroke-width="2.2"/><path d="M14.6 1.2 V25.3" stroke="#e6ebf7" stroke-width="2.2"/></svg>
<div class="b" style="left:2673.4px;top:88.4px;width:2.0px;height:31.6px;background:#69758a;"></div>
<svg class="b" style="left:2693.4px;top:91.0px;" width="27.0" height="26.0" viewBox="0 0 27 26"><g fill="none" stroke="#e6ebf7" stroke-width="2.2"><rect x="1.2" y="1.2" width="10" height="22.6" rx="1.8"/><rect x="17" y="1.2" width="8.4" height="8" rx="1.8"/><rect x="17" y="15.8" width="8.4" height="8" rx="1.8"/></g></svg>
<span class="t" style="left:917.9px;top:223.4px;font-size:31.2px;line-height:40.6px;color:#a599e9;letter-spacing:1.228px;">apps</span>
<svg class="b" style="left:1000.1px;top:230.0px;" width="18.0" height="26.0" viewBox="0 0 18 26"><path d="M3.4 2.6 L14.4 13 L3.4 23.4" fill="none" stroke="#a599e9" stroke-width="2.2"/></svg>
<span class="t" style="left:1027.1px;top:223.4px;font-size:31.2px;line-height:40.6px;color:#a599e9;letter-spacing:1.477px;">my-remix-app</span>
<svg class="b" style="left:1244.2px;top:230.0px;" width="18.0" height="26.0" viewBox="0 0 18 26"><path d="M3.4 2.6 L14.4 13 L3.4 23.4" fill="none" stroke="#a599e9" stroke-width="2.2"/></svg>
<span class="t" style="left:1271.1px;top:223.4px;font-size:31.2px;line-height:40.6px;color:#a599e9;letter-spacing:1.892px;">app</span>
<svg class="b" style="left:1337.0px;top:230.0px;" width="18.0" height="26.0" viewBox="0 0 18 26"><path d="M3.4 2.6 L14.4 13 L3.4 23.4" fill="none" stroke="#a599e9" stroke-width="2.2"/></svg>
<span class="t" style="left:1364.1px;top:223.4px;font-size:31.2px;line-height:40.6px;color:#a599e9;letter-spacing:1.345px;">routes</span>
<svg class="b" style="left:1468.5px;top:230.0px;" width="18.0" height="26.0" viewBox="0 0 18 26"><path d="M3.4 2.6 L14.4 13 L3.4 23.4" fill="none" stroke="#a599e9" stroke-width="2.2"/></svg>
<svg class="b" style="left:1496.0px;top:223.4px;" width="38.4" height="38.4" viewBox="0 0 32 32"><g fill="none" stroke="#1886dc" stroke-width="1.15"><ellipse cx="16" cy="16" rx="13.4" ry="5"/><ellipse cx="16" cy="16" rx="13.4" ry="5" transform="rotate(60 16 16)"/><ellipse cx="16" cy="16" rx="13.4" ry="5" transform="rotate(120 16 16)"/></g><circle cx="16" cy="16" r="2.5" fill="#1886dc"/></svg>
<span class="t" style="left:1548.1px;top:223.4px;font-size:31.2px;line-height:40.6px;color:#a599e9;letter-spacing:0.839px;">index.tsx</span>
<svg class="b" style="left:1688.7px;top:230.0px;" width="18.0" height="26.0" viewBox="0 0 18 26"><path d="M3.4 2.6 L14.4 13 L3.4 23.4" fill="none" stroke="#a599e9" stroke-width="2.2"/></svg>
<svg class="b" style="left:1717.9px;top:223.7px;" width="34.2" height="36.0" viewBox="0 0 34.2 36"><g fill="none" stroke="#c98ae2" stroke-width="2.3" stroke-linejoin="round"><path d="M17.1 2.4 L30.4 9.2 V25.6 L17.1 33 L3.8 25.6 V9.2 Z"/><path d="M3.8 9.2 L17.1 16.6 L30.4 9.2 M17.1 16.6 V33"/></g></svg>
<span class="t" style="left:1762.1px;top:223.4px;font-size:31.2px;line-height:40.6px;color:#ab9df0;letter-spacing:0.454px;">Index</span>
<div class="b" style="left:879.0px;top:266.0px;width:1869.0px;height:2.6px;background:#0b2e4b;"></div>
<div class="b" style="left:1040.0px;top:562.4px;width:1674.4px;height:50.8px;background:transparent;background:linear-gradient(to right,rgba(1,15,32,0) 0,#010f20 22px,#010f20 100%);"></div>
<div class="b" style="left:1053.8px;top:461.8px;width:2.0px;height:252.0px;background:#1a2f48;"></div>
<div class="b" style="left:1094.1px;top:512.2px;width:2.0px;height:151.2px;background:#1a2f48;"></div>
<div class="b" style="left:1134.3px;top:562.6px;width:2.4px;height:50.4px;background:#748498;"></div>
<span class="t m" style="left:970.3px;top:316.1px;font-size:33.6px;line-height:43.7px;color:#4b6479;">5</span>
<span class="t m" style="left:970.3px;top:366.5px;font-size:33.6px;line-height:43.7px;color:#4b6479;">4</span>
<span class="t m" style="left:970.3px;top:416.9px;font-size:33.6px;line-height:43.7px;color:#4b6479;">3</span>
<span class="t m" style="left:970.3px;top:467.3px;font-size:33.6px;line-height:43.7px;color:#4b6479;">2</span>
<span class="t m" style="left:970.3px;top:517.7px;font-size:33.6px;line-height:43.7px;color:#4b6479;">1</span>
<span class="t m" style="left:930.3px;top:568.1px;font-size:33.6px;line-height:43.7px;color:#c5e4fd;">6</span>
<span class="t m" style="left:970.3px;top:618.5px;font-size:33.6px;line-height:43.7px;color:#4b6479;">1</span>
<span class="t m" style="left:970.3px;top:668.9px;font-size:33.6px;line-height:43.7px;color:#4b6479;">2</span>
<span class="t m" style="left:970.3px;top:719.3px;font-size:33.6px;line-height:43.7px;color:#4b6479;">3</span>
<span class="t m" style="left:970.3px;top:769.7px;font-size:33.6px;line-height:43.7px;color:#4b6479;">4</span>
<span class="t" style="left:1054.4px;top:273.0px;font-size:30.2px;line-height:39.3px;color:#46639e;letter-spacing:-0.244px;">You, 23 hours ago | 1 author (You)</span>
<div class="t m" style="left:1053.8px;top:312.7px;font-size:33.6px;line-height:50.4px;color:#d6deeb;"><span style="color:#c792ea;font-style:italic;">import</span> <span style="color:#ffd700;">{</span> <span style="color:#d6deeb;">Button</span> <span style="color:#ffd700;">}</span> <span style="color:#c792ea;font-style:italic;">from</span> <span style="color:#d9f5dd;">&#x27;</span><span style="color:#ecc48d;">shared-ui</span><span style="color:#d9f5dd;">&#x27;</span><span style="color:#d6deeb;">;</span></div>
<div class="t m" style="left:1053.8px;top:413.5px;font-size:33.6px;line-height:50.4px;color:#d6deeb;"><span style="color:#c792ea;font-style:italic;">export</span> <span style="color:#c792ea;font-style:italic;">default</span> <span style="color:#c792ea;">function</span> <span style="color:#82aaff;font-style:italic;">Index</span><span style="color:#ffd700;">()</span> <span style="color:#ffd700;">{</span></div>
<div class="t m" style="left:1053.8px;top:463.9px;font-size:33.6px;line-height:50.4px;color:#d6deeb;">  <span style="color:#c792ea;font-style:italic;">return</span> <span style="color:#da70d6;">(</span></div>
<div class="t m" style="left:1053.8px;top:514.3px;font-size:33.6px;line-height:50.4px;color:#d6deeb;">    <span style="color:#7fdbca;">&lt;</span><span style="color:#caece6;">div</span><span style="color:#7fdbca;">&gt;</span></div>
<div class="b" style="left:1496.8px;top:562.6px;width:19.2px;height:50.4px;background:#16263a;box-sizing:border-box;border:1.6px solid #5a6678;"></div>
<div class="b" style="left:1638.4px;top:562.8px;width:138.5px;height:50.0px;background:#2a2d49;"></div>
<div class="b" style="left:1638.4px;top:562.8px;width:18.8px;height:50.0px;background:#7e9cc2;"></div>
<div class="b" style="left:2251.7px;top:562.6px;width:19.2px;height:50.4px;background:#16263a;box-sizing:border-box;border:1.6px solid #5a6678;"></div>
<div class="t m" style="left:1053.8px;top:564.7px;font-size:33.6px;line-height:50.4px;color:#d6deeb;">      <span style="color:#7fdbca;">&lt;</span><span style="color:#f78c6c;">Button</span> <span style="color:#c5e478;font-style:italic;">onClick</span><span style="color:#c792ea;">=</span><span style="color:#179fff;">{</span><span style="color:#ffd700;">()</span> <span style="color:#c792ea;">=&gt;</span> <span style="color:#8d6a4f;">c</span><span style="color:#d6deeb;">onsole</span><span style="color:#c792ea;">.</span><span style="color:#82aaff;font-style:italic;">log</span><span style="color:#ffd700;">(</span><span style="font-size:31.6px;line-height:1;letter-spacing:0.137px;color:#cdd8e8;background:#3a4c61;padding:1.2px 4px 1.6px 4px;margin-right:9.4px;margin-left:-1.2px;position:relative;top:1.7px;-webkit-text-stroke:0.6px currentColor;">message:</span><span style="color:#d9f5dd;">&#x27;</span><span style="color:#ecc48d;">clicked</span><span style="color:#d9f5dd;">&#x27;</span><span style="color:#ffd700;">)</span><span style="color:#179fff;">}</span><span style="color:#7fdbca;">&gt;</span><span style="color:#d6deeb;">Click me</span><span style="color:#7fdbca;">&lt;/</span><span style="color:#f78c6c;">Button</span><span style="color:#7fdbca;">&gt;</span></div>
<div class="t m" style="left:1053.8px;top:615.1px;font-size:33.6px;line-height:50.4px;color:#d6deeb;">    <span style="color:#7fdbca;">&lt;/</span><span style="color:#caece6;">div</span><span style="color:#7fdbca;">&gt;</span></div>
<div class="t m" style="left:1053.8px;top:665.5px;font-size:33.6px;line-height:50.4px;color:#d6deeb;">  <span style="color:#da70d6;">)</span><span style="color:#d6deeb;">;</span></div>
<div class="t m" style="left:1053.8px;top:715.9px;font-size:33.6px;line-height:50.4px;color:#d6deeb;"><span style="color:#ffd700;">}</span></div>
<div class="b" style="left:2714.4px;top:268.6px;width:33.6px;height:1061.4px;background:#072b54;"></div>
<div class="b" style="left:2714.4px;top:268.6px;width:1.2px;height:1432.9px;background:#123354;"></div>
<div class="b" style="left:2714.4px;top:485.6px;width:33.6px;height:3.0px;background:#3f6a97;"></div>
<div class="b" style="left:2724.8px;top:488.6px;width:13.2px;height:36.2px;background:#4d6e98;"></div>
<div class="b" style="left:1053.0px;top:1669.6px;width:1018.0px;height:30.4px;background:#04305b;"></div>
<svg class="b" style="left:135.5px;top:1711.0px;" width="34.0" height="34.0" viewBox="0 0 28 32"><path d="M5 12.6 L12.6 20 L5 27.4 M20.2 4.2 L13.2 11.2 L20.2 18.2" fill="none" stroke="#e6ecf5" stroke-width="2.3"/></svg>
<svg class="b" style="left:205.2px;top:1711.2px;" width="33.6" height="33.6" viewBox="0 0 16 16"><g fill="none" stroke="#5e7e9c" stroke-width="1.15"><circle cx="4.6" cy="3.2" r="1.7"/><circle cx="4.6" cy="12.8" r="1.7"/><circle cx="11.6" cy="5.4" r="1.7"/><path d="M4.6 4.9 V11.1 M11.6 7.1 C11.6 9.6 7.6 9 4.9 11.2"/></g></svg>
<span class="t" style="left:254.2px;top:1710.3px;font-size:28.8px;line-height:37.4px;color:#5e7e9c;letter-spacing:1.112px;">main</span>
<svg class="b" style="left:358.0px;top:1711.2px;" width="33.6" height="33.6" viewBox="0 0 16 16"><g fill="none" stroke="#5e7e9c" stroke-width="1.1"><path d="M5.2 11.6 H4.1 A2.9 2.9 0 0 1 3.9 5.9 A4.2 4.2 0 0 1 12 5.4 A3.2 3.2 0 0 1 12.2 11.6 H10.8"/><path d="M8 13.4 V7.6 M5.8 9.6 L8 7.4 L10.2 9.6"/></g></svg>
<svg class="b" style="left:429.2px;top:1711.2px;" width="33.6" height="33.6" viewBox="0 0 16 16"><g fill="none" stroke="#5e7e9c" stroke-width="1.1"><circle cx="8" cy="8" r="6.4"/><path d="M5.5 5.5 L10.5 10.5 M10.5 5.5 L5.5 10.5"/></g></svg>
<span class="t" style="left:470.6px;top:1710.3px;font-size:28.8px;line-height:37.4px;color:#5e7e9c;">0</span>
<svg class="b" style="left:496.9px;top:1711.2px;" width="33.6" height="33.6" viewBox="0 0 16 16"><g fill="none" stroke="#5e7e9c" stroke-width="1.1" stroke-linejoin="round"><path d="M8 1.8 L14.8 14 H1.2 Z"/><path d="M8 6.2 V10.2 M8 11.4 V12.6"/></g></svg>
<span class="t" style="left:539.4px;top:1710.3px;font-size:28.8px;line-height:37.4px;color:#5e7e9c;">0</span>
<svg class="b" style="left:594.7px;top:1711.2px;" width="33.6" height="33.6" viewBox="0 0 16 16"><g fill="none" stroke="#5e7e9c" stroke-width="1.15" stroke-linejoin="round"><path d="M9.4 1.6 L15 6 L9.4 10.4 V7.8 C5.6 7.6 3.2 9 2.2 11.6 C2.2 7.4 4.8 4.4 9.4 4.2 Z"/><circle cx="6" cy="12.6" r="2"/></g></svg>
<span class="t" style="left:637.4px;top:1710.3px;font-size:28.8px;line-height:37.4px;color:#5e7e9c;letter-spacing:0.497px;">Live Share</span>
<span class="t" style="left:816.6px;top:1710.3px;font-size:28.8px;line-height:37.4px;color:#5e7e9c;letter-spacing:0.877px;">Git Graph</span>
<span class="t" style="left:985.5px;top:1710.3px;font-size:28.8px;line-height:37.4px;color:#5e7e9c;letter-spacing:1.544px;">-- NORMAL --</span>
<span class="t" style="left:1465.9px;top:1710.3px;font-size:28.8px;line-height:37.4px;color:#5e7e9c;letter-spacing:0.932px;">Ln 6, Col 30</span>
<span class="t" style="left:1668.5px;top:1710.3px;font-size:28.8px;line-height:37.4px;color:#5e7e9c;letter-spacing:0.847px;">Spaces: 2</span>
<span class="t" style="left:1840.9px;top:1710.3px;font-size:28.8px;line-height:37.4px;color:#5e7e9c;letter-spacing:1.692px;">UTF-8</span>
<span class="t" style="left:1966.9px;top:1710.3px;font-size:28.8px;line-height:37.4px;color:#5e7e9c;letter-spacing:0.451px;">LF</span>
<span class="t" style="left:2036.3px;top:1709.3px;font-size:28.8px;line-height:37.4px;color:#5e7e9c;letter-spacing:9.822px;">{}</span>
<span class="t" style="left:2082.8px;top:1710.3px;font-size:28.8px;line-height:37.4px;color:#5e7e9c;letter-spacing:0.719px;">TypeScript React</span>
<svg class="b" style="left:2351.8px;top:1710.0px;" width="36.0" height="36.0" viewBox="0 0 16 16"><g fill="none" stroke="#5e7e9c" stroke-width="1.5" stroke-linejoin="round"><path d="M2.6 7.6 C1.6 8.4 1.3 9.4 1.3 10.6 C1.3 12.8 4.6 14.4 8 14.4 S14.7 12.8 14.7 10.6 C14.7 9.4 14.4 8.4 13.4 7.6"/><rect x="2.4" y="2.2" width="5" height="5.6" rx="2.2"/><rect x="8.6" y="2.2" width="5" height="5.6" rx="2.2"/><path d="M6.2 10 V11.8 M9.8 10 V11.8" stroke-width="1.3"/></g></svg>
<svg class="b" style="left:2423.8px;top:1711.2px;" width="33.6" height="33.6" viewBox="0 0 16 16"><g fill="none" stroke="#5e7e9c" stroke-width="1.1"><path d="M1 8.6 L2.6 10.4 M3.6 8.8 L6.6 12.2 L14.6 2.8 M4.4 11.6 L5 12.2 L12.2 3.2"/></g></svg>
<span class="t" style="left:2466.2px;top:1710.3px;font-size:28.8px;line-height:37.4px;color:#5e7e9c;letter-spacing:1.205px;">Prettier</span>
<svg class="b" style="left:2605.8px;top:1711.2px;" width="33.6" height="33.6" viewBox="0 0 16 16"><g fill="none" stroke="#5e7e9c" stroke-width="1.1" stroke-linejoin="round"><circle cx="5.6" cy="8.4" r="2.6"/><path d="M1 15 C1.2 12.2 3 11 5.6 11 S10 12.2 10.2 15"/><path d="M6.4 3 V1.6 H15 V8 H12.6 L10.6 10 V8 H9.6"/></g></svg>
<svg class="b" style="left:2678.0px;top:1711.2px;" width="33.6" height="33.6" viewBox="0 0 16 16"><g fill="none" stroke="#5e7e9c" stroke-width="1.1" stroke-linejoin="round"><path d="M9.2 2.2 A4.6 4.6 0 0 0 3.6 6.8 V10.6 L2.2 12.6 H13.8 L12.4 10.6 V8.6"/><path d="M6.6 12.8 A1.5 1.5 0 0 0 9.4 12.8"/></g><circle cx="12" cy="4" r="2.6" fill="#5e7e9c"/></svg>
</div><div id="rim"></div></div>
<svg id="over" width="2860" height="1902" viewBox="0 0 2860 1902"><g fill="none" stroke="#f7ea1c" stroke-width="4.8" stroke-linecap="butt"><path d="M818.6 572.2 L657.4 784"/><path d="M651.7 754.3 C644.5 776 638.5 796.5 649 802.2 C660 807.5 678 797 693.7 787.8"/><ellipse cx="600.4" cy="1326.8" rx="291" ry="216.4"/></g></svg>
</body></html>
